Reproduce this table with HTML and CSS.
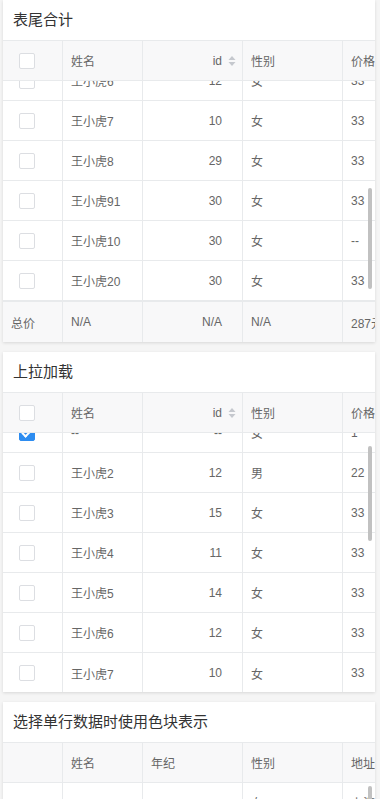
FILE: index.html
```html
<!DOCTYPE html>
<html lang="zh-CN">
<head>
    <meta charset="UTF-8">
    <meta name="viewport" content="width=device-width, initial-scale=1.0">
    <title>表格示例</title>
    <link rel="stylesheet" href="styles.css">
</head>
<body>
    <!-- 表尾合计 -->
    <div class="card">
        <div class="card-title">表尾合计</div>
        <div class="row head">
            <div class="cell check"><span class="checkbox"></span></div>
            <div class="cell">姓名</div>
            <div class="cell num">id<svg class="sort" width="8" height="12" viewBox="0 0 8 12"><path d="M4 1 L7.5 5 H0.5 Z M4 11 L7.5 7 H0.5 Z" fill="#c5c8ce"/></svg></div>
            <div class="cell">性别</div>
            <div class="cell">价格</div>
        </div>
        <div class="table-body body-1">
            <div class="rows">
                <div class="row">
                    <div class="cell check"><span class="checkbox"></span></div>
                    <div class="cell">王小虎6</div>
                    <div class="cell num">12</div>
                    <div class="cell">女</div>
                    <div class="cell">33</div>
                </div>
                <div class="row">
                    <div class="cell check"><span class="checkbox"></span></div>
                    <div class="cell">王小虎7</div>
                    <div class="cell num">10</div>
                    <div class="cell">女</div>
                    <div class="cell">33</div>
                </div>
                <div class="row">
                    <div class="cell check"><span class="checkbox"></span></div>
                    <div class="cell">王小虎8</div>
                    <div class="cell num">29</div>
                    <div class="cell">女</div>
                    <div class="cell">33</div>
                </div>
                <div class="row">
                    <div class="cell check"><span class="checkbox"></span></div>
                    <div class="cell">王小虎91</div>
                    <div class="cell num">30</div>
                    <div class="cell">女</div>
                    <div class="cell">33</div>
                </div>
                <div class="row">
                    <div class="cell check"><span class="checkbox"></span></div>
                    <div class="cell">王小虎10</div>
                    <div class="cell num">30</div>
                    <div class="cell">女</div>
                    <div class="cell">--</div>
                </div>
                <div class="row">
                    <div class="cell check"><span class="checkbox"></span></div>
                    <div class="cell">王小虎20</div>
                    <div class="cell num">30</div>
                    <div class="cell">女</div>
                    <div class="cell">33</div>
                </div>
            </div>
            <div class="thumb thumb-1"></div>
        </div>
        <div class="row foot">
            <div class="cell">总价</div>
            <div class="cell">N/A</div>
            <div class="cell num">N/A</div>
            <div class="cell">N/A</div>
            <div class="cell">287元</div>
        </div>
    </div>

    <!-- 上拉加载 -->
    <div class="card">
        <div class="card-title">上拉加载</div>
        <div class="row head">
            <div class="cell check"><span class="checkbox"></span></div>
            <div class="cell">姓名</div>
            <div class="cell num">id<svg class="sort" width="8" height="12" viewBox="0 0 8 12"><path d="M4 1 L7.5 5 H0.5 Z M4 11 L7.5 7 H0.5 Z" fill="#c5c8ce"/></svg></div>
            <div class="cell">性别</div>
            <div class="cell">价格</div>
        </div>
        <div class="table-body body-2">
            <div class="rows">
                <div class="row">
                    <div class="cell check"><span class="checkbox checked"></span></div>
                    <div class="cell">--</div>
                    <div class="cell num">--</div>
                    <div class="cell">女</div>
                    <div class="cell">1</div>
                </div>
                <div class="row">
                    <div class="cell check"><span class="checkbox"></span></div>
                    <div class="cell">王小虎2</div>
                    <div class="cell num">12</div>
                    <div class="cell">男</div>
                    <div class="cell">22</div>
                </div>
                <div class="row">
                    <div class="cell check"><span class="checkbox"></span></div>
                    <div class="cell">王小虎3</div>
                    <div class="cell num">15</div>
                    <div class="cell">女</div>
                    <div class="cell">33</div>
                </div>
                <div class="row">
                    <div class="cell check"><span class="checkbox"></span></div>
                    <div class="cell">王小虎4</div>
                    <div class="cell num">11</div>
                    <div class="cell">女</div>
                    <div class="cell">33</div>
                </div>
                <div class="row">
                    <div class="cell check"><span class="checkbox"></span></div>
                    <div class="cell">王小虎5</div>
                    <div class="cell num">14</div>
                    <div class="cell">女</div>
                    <div class="cell">33</div>
                </div>
                <div class="row">
                    <div class="cell check"><span class="checkbox"></span></div>
                    <div class="cell">王小虎6</div>
                    <div class="cell num">12</div>
                    <div class="cell">女</div>
                    <div class="cell">33</div>
                </div>
                <div class="row last">
                    <div class="cell check"><span class="checkbox"></span></div>
                    <div class="cell">王小虎7</div>
                    <div class="cell num">10</div>
                    <div class="cell">女</div>
                    <div class="cell">33</div>
                </div>
            </div>
            <div class="thumb thumb-2"></div>
        </div>
    </div>

    <!-- 单选高亮 -->
    <div class="card">
        <div class="card-title">选择单行数据时使用色块表示</div>
        <div class="row head">
            <div class="cell"></div>
            <div class="cell">姓名</div>
            <div class="cell">年纪</div>
            <div class="cell">性别</div>
            <div class="cell">地址</div>
        </div>
        <div class="table-body body-3">
            <div class="row">
                <div class="cell"></div>
                <div class="cell"></div>
                <div class="cell"></div>
                <div class="cell">女</div>
                <div class="cell">上海</div>
            </div>
            <div class="row">
                <div class="cell"></div>
                <div class="cell"></div>
                <div class="cell"></div>
                <div class="cell">男</div>
                <div class="cell">北京</div>
            </div>
            <div class="thumb thumb-3"></div>
        </div>
    </div>
</body>
</html>
```

FILE: styles.css
```css
body {
    margin: 0;
    padding: 0 5px 0 3px;
    background-color: #f5f5f5;
    font-family: "Liberation Sans", "Noto Sans CJK SC", sans-serif;
    font-size: 12px;
    color: #666;
}

.card {
    background-color: #fff;
    margin-bottom: 10px;
    box-shadow: 0 1px 3px rgba(0, 0, 0, 0.12);
    overflow: hidden;
}

.card-title {
    height: 40px;
    line-height: 40px;
    padding: 0 10px;
    font-size: 15px;
    color: #333;
    border-bottom: 1px solid #e8eaec;
}

.row {
    display: grid;
    grid-template-columns: 60px 80px 100px 100px 100px;
    height: 40px;
    box-sizing: border-box;
    border-bottom: 1px solid #e8eaec;
}

.row.last {
    border-bottom: none;
}

.cell {
    display: flex;
    align-items: center;
    padding: 0 8px;
    border-right: 1px solid #e8eaec;
    white-space: nowrap;
    overflow: hidden;
}

.cell.check {
    padding-left: 16px;
}

.cell.num {
    justify-content: flex-end;
    padding-right: 20px;
}

.head {
    background-color: #f8f8f9;
}

.head .cell.num {
    padding-right: 6px;
}

.sort {
    margin-left: 6px;
}

.foot {
    background-color: #f8f8f9;
    border-bottom: none;
}

.checkbox {
    width: 16px;
    height: 16px;
    box-sizing: border-box;
    border: 1px solid #dcdee2;
    border-radius: 2px;
    background-color: #fff;
    position: relative;
}

.checkbox.checked {
    background-color: #2d8cf0;
    border-color: #2d8cf0;
}

.checkbox.checked::after {
    content: "";
    position: absolute;
    left: 4px;
    top: 1px;
    width: 4px;
    height: 8px;
    border: 2px solid #fff;
    border-top: none;
    border-left: none;
    transform: rotate(45deg);
}

.table-body {
    position: relative;
    overflow: hidden;
}

.body-1 {
    height: 220px;
    border-bottom: 1px solid #e8eaec;
}

.body-2 {
    height: 259px;
}

.body-1 .rows,
.body-2 .rows {
    margin-top: -20px;
}

/* scrollbar thumbs drawn over the scrolled rows */
.thumb {
    position: absolute;
    right: 3px;
    width: 4px;
    border-radius: 2px;
    background-color: #c1c1c1;
}

.thumb-1 {
    top: 107px;
    height: 101px;
}

.thumb-2 {
    top: 13px;
    height: 95px;
}

.thumb-3 {
    top: 3px;
    height: 60px;
}
```
